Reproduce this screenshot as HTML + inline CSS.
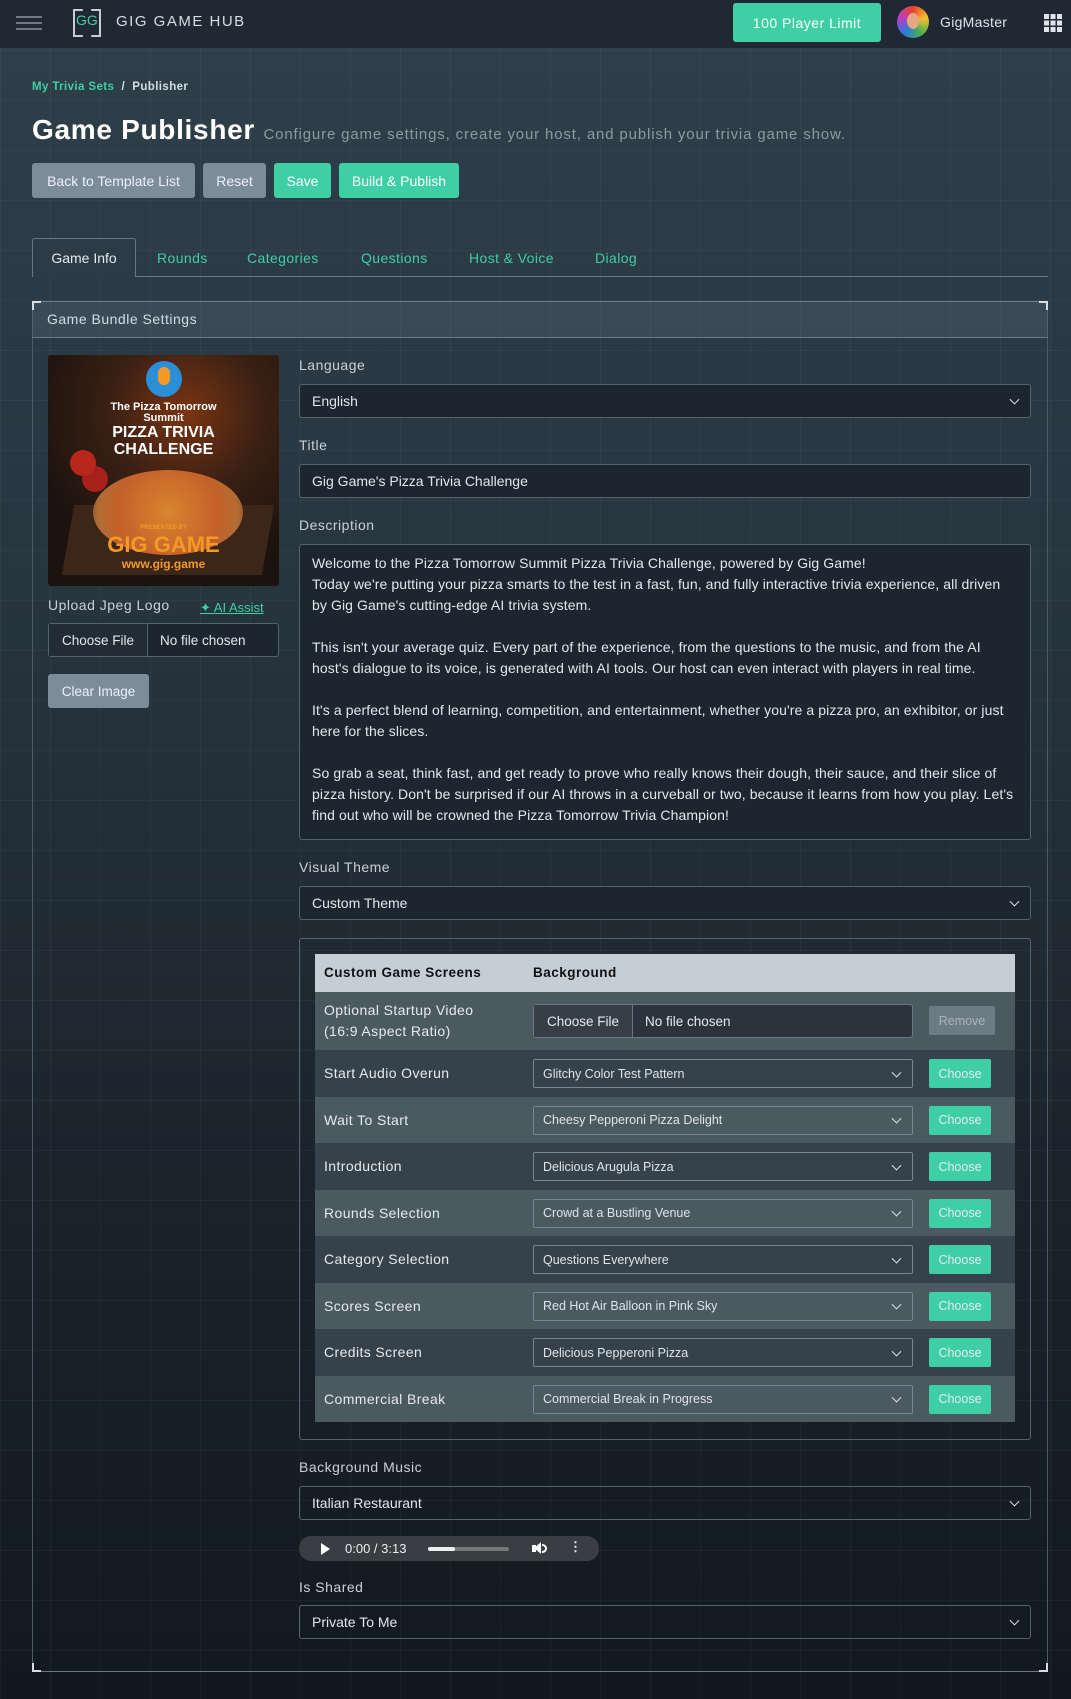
<!DOCTYPE html>
<html><head><meta charset="utf-8"><style>
*{box-sizing:border-box;margin:0;padding:0}
body{width:1071px;height:1699px;overflow:hidden;font-family:"Liberation Sans",sans-serif;color:#d6dde2;
background:linear-gradient(180deg,#2f404b 0%,#27353f 35%,#1a232c 70%,#121820 100%);position:relative}
.grid{position:absolute;inset:0;background-image:linear-gradient(rgba(255,255,255,.035) 1px,transparent 1px),linear-gradient(90deg,rgba(255,255,255,.035) 1px,transparent 1px);background-size:50px 50px;background-position:0 0}
.abs{position:absolute}
.nav{position:absolute;left:0;top:0;width:1071px;height:48px;background:#1f2833}
.btn{position:absolute;border-radius:3px;font-size:14px;display:flex;align-items:center;justify-content:center;color:#fff}
.g{background:#3ecfa4}.gr{background:#7c8d99;color:#eef}
.lbl{position:absolute;font-size:14px;color:#c9d1d6;letter-spacing:.5px}
.inp{position:absolute;left:299px;width:732px;border:1px solid #55636e;border-radius:3px;background:#1c2630;font-size:14px;color:#e2e7ea;padding-left:12px;display:flex;align-items:center}
.chev{position:absolute;right:12px;top:50%;width:7px;height:7px;border-right:1.5px solid #dfe4e8;border-bottom:1.5px solid #dfe4e8;transform:translateY(-70%) rotate(45deg)}
.row{position:absolute;left:315px;width:700px;height:46.5px;font-size:14px;color:#e6eaee;letter-spacing:.4px}
.row .t{position:absolute;left:9px;top:50%;transform:translateY(-50%)}
.row .s{position:absolute;left:218px;width:380px;height:29px;top:9px;border:1px solid #7a8690;border-radius:2px;font-size:12.5px;padding-left:9px;display:flex;align-items:center;letter-spacing:0;color:#dfe4e8}
.row .c{position:absolute;left:614px;width:62px;height:29px;top:9px;background:#3ecfa4;border-radius:2px;font-size:12.5px;display:flex;align-items:center;justify-content:center;letter-spacing:0}
.desc{font-size:14px;line-height:21px;white-space:nowrap;letter-spacing:.1px}
</style></head><body><div class="grid"></div>
<div class="nav">
 <div class="abs" style="left:16px;top:16px;width:26px;height:2px;background:#6d7a85;box-shadow:0 6px 0 #6d7a85,0 12px 0 #6d7a85"></div>
 <div class="abs" style="left:73px;top:9px;width:28px;height:28px;border:2px solid #c6ced4;clip-path:polygon(0 0,35% 0,35% 100%,0 100%,0 0,100% 0,100% 100%,65% 100%,65% 0)"></div>
 <div class="abs" style="left:76px;top:12px;font-size:14px;color:#3ecfa4">GG</div>
 <div class="abs" style="left:116px;top:13px;font-size:15px;letter-spacing:1.5px;color:#d6dde2">GIG GAME HUB</div>
 <div class="btn g" style="left:733px;top:3px;width:148px;height:39px;font-size:14px;letter-spacing:.5px">100 Player Limit</div>
 <div class="abs" style="left:897px;top:6px;width:32px;height:32px;border-radius:50%;background:conic-gradient(#e9432d,#f2c12e,#4cb050,#2a7bd6,#b43fc6,#e9432d)"><div style="position:absolute;left:10px;top:7px;width:12px;height:16px;border-radius:50%;background:#e2a884"></div></div>
 <div class="abs" style="left:940px;top:14px;font-size:14px;color:#dde3e7;letter-spacing:.3px">GigMaster</div>
 <div class="abs" style="left:1044px;top:14px;width:18px;height:18px;background:repeating-linear-gradient(90deg,#dfe4e8 0 5px,transparent 5px 6.5px);-webkit-mask:repeating-linear-gradient(180deg,#000 0 5px,transparent 5px 6.5px)"></div>
</div>
<div class="abs" style="left:32px;top:81px;font-size:11.5px;font-weight:bold;color:#3ecfa4;letter-spacing:.4px">My Trivia Sets <span style="color:#d6dde2">&nbsp;/&nbsp; Publisher</span></div>
<div class="abs" style="left:32px;top:114px;font-size:28px;font-weight:bold;color:#fff;letter-spacing:.7px">Game Publisher <span style="font-size:15px;font-weight:normal;color:#8d9aa3;letter-spacing:.85px">Configure game settings, create your host, and publish your trivia game show.</span></div>
<div class="btn gr" style="left:32px;top:163px;width:163px;height:35px">Back to Template List</div>
<div class="btn gr" style="left:203px;top:163px;width:63px;height:35px">Reset</div>
<div class="btn g" style="left:274px;top:163px;width:57px;height:35px">Save</div>
<div class="btn g" style="left:339px;top:163px;width:120px;height:35px">Build &amp; Publish</div>
<div class="abs" style="left:32px;top:276px;width:1016px;height:1px;background:#6b7882"></div>
<div class="abs" style="left:32px;top:238px;width:104px;height:39px;border:1px solid #6b7882;border-bottom:none;border-radius:3px 3px 0 0;background:#2c3b45;font-size:14px;color:#e6eaee;display:flex;align-items:center;justify-content:center">Game Info</div>
<div class="abs" style="top:250px;left:157px;font-size:14px;color:#3ecfa4;letter-spacing:.4px">Rounds</div>
<div class="abs" style="top:250px;left:247px;font-size:14px;color:#3ecfa4;letter-spacing:.4px">Categories</div>
<div class="abs" style="top:250px;left:361px;font-size:14px;color:#3ecfa4;letter-spacing:.4px">Questions</div>
<div class="abs" style="top:250px;left:469px;font-size:14px;color:#3ecfa4;letter-spacing:.4px">Host &amp; Voice</div>
<div class="abs" style="top:250px;left:595px;font-size:14px;color:#3ecfa4;letter-spacing:.4px">Dialog</div>
<!-- panel -->
<div class="abs" style="left:32px;top:301px;width:1016px;height:1371px;border:1px solid #4d5b66;border-top-color:#6b7882;border-bottom-color:#6b7882"></div>
<div class="abs" style="left:32px;top:301px;width:1016px;height:37px;background:rgba(120,140,155,.2);border-bottom:1px solid #6b7882;font-size:14px;color:#d6dde2;padding:10px 0 0 15px;letter-spacing:.5px">Game Bundle Settings</div>
<div class="abs" style="left:32px;top:301px;width:9px;height:9px;border-left:2px solid #d6dde2;border-top:2px solid #d6dde2"></div>
<div class="abs" style="left:1039px;top:301px;width:9px;height:9px;border-right:2px solid #d6dde2;border-top:2px solid #d6dde2"></div>
<div class="abs" style="left:32px;top:1663px;width:9px;height:9px;border-left:2px solid #d6dde2;border-bottom:2px solid #d6dde2"></div>
<div class="abs" style="left:1039px;top:1663px;width:9px;height:9px;border-right:2px solid #d6dde2;border-bottom:2px solid #d6dde2"></div>
<!-- image -->
<div class="abs" style="left:48px;top:355px;width:231px;height:231px;border-radius:3px;overflow:hidden;background:radial-gradient(circle at 60% 25%,#7a3412 0,#3a2014 35%,#1d130e 70%)">
 <div class="abs" style="left:20px;top:150px;width:200px;height:70px;background:#3b2619;transform:skewX(-10deg)"></div>
 <div class="abs" style="left:45px;top:115px;width:150px;height:85px;border-radius:50%;background:radial-gradient(circle,#d8842e 0,#c4602a 60%,#b36c34 80%,#7a4a25 100%)"></div>
 <div class="abs" style="left:22px;top:95px;width:26px;height:26px;border-radius:50%;background:#b8261c;box-shadow:12px 16px 0 #a8201a"></div>
 <div class="abs" style="left:98px;top:6px;width:36px;height:36px;border-radius:50%;background:#2a8fd6"><div style="position:absolute;left:12px;top:6px;width:12px;height:18px;border-radius:6px;background:#f39a26"></div></div>
 <div class="abs" style="left:0;top:47px;width:231px;text-align:center;font-weight:bold;color:#fff;font-size:11px;line-height:11px">The Pizza Tomorrow<br>Summit<br><span style="font-size:16px;line-height:17px">PIZZA TRIVIA<br>CHALLENGE</span></div>
 <div class="abs" style="left:0;top:170px;width:231px;text-align:center;font-weight:bold;color:#f39a26;font-size:6px">PRESENTED BY</div>
 <div class="abs" style="left:0;top:178px;width:231px;text-align:center;font-weight:bold;color:#f39a26;font-size:22px;line-height:24px">GIG GAME</div>
 <div class="abs" style="left:0;top:202px;width:231px;text-align:center;font-weight:bold;color:#f39a26;font-size:12px">www.gig.game</div>
</div>
<div class="lbl" style="left:48px;top:597px">Upload Jpeg Logo</div>
<div class="abs" style="left:200px;top:600px;font-size:13px;color:#3ecfa4;text-decoration:underline">✦ AI Assist</div>
<div class="abs" style="left:48px;top:623px;width:231px;height:34px;border:1px solid #55636e;border-radius:3px;background:#1c2630;font-size:13.5px;color:#e2e7ea;display:flex;align-items:center">
 <div style="width:99px;height:100%;border-right:1px solid #55636e;background:#222c36;display:flex;align-items:center;justify-content:center">Choose File</div><div style="padding-left:12px">No file chosen</div></div>
<div class="btn gr" style="left:48px;top:674px;width:101px;height:34px;font-size:13.5px">Clear Image</div>
<!-- right column -->
<div class="lbl" style="left:299px;top:357px">Language</div>
<div class="inp" style="top:384px;height:34px">English<span class="chev"></span></div>
<div class="lbl" style="left:299px;top:437px">Title</div>
<div class="inp" style="top:464px;height:34px">Gig Game's Pizza Trivia Challenge</div>
<div class="lbl" style="left:299px;top:517px">Description</div>
<div class="inp desc" style="top:544px;height:296px;padding-top:8px;display:block">Welcome to the Pizza Tomorrow Summit Pizza Trivia Challenge, powered by Gig Game!<br>Today we're putting your pizza smarts to the test in a fast, fun, and fully interactive trivia experience, all driven<br>by Gig Game's cutting-edge AI trivia system.<br><br>This isn't your average quiz. Every part of the experience, from the questions to the music, and from the AI<br>host's dialogue to its voice, is generated with AI tools. Our host can even interact with players in real time.<br><br>It's a perfect blend of learning, competition, and entertainment, whether you're a pizza pro, an exhibitor, or just<br>here for the slices.<br><br>So grab a seat, think fast, and get ready to prove who really knows their dough, their sauce, and their slice of<br>pizza history. Don't be surprised if our AI throws in a curveball or two, because it learns from how you play. Let's<br>find out who will be crowned the Pizza Tomorrow Trivia Champion!</div>
<div class="lbl" style="left:299px;top:859px">Visual Theme</div>
<div class="inp" style="top:886px;height:34px">Custom Theme<span class="chev"></span></div>
<div class="abs" style="left:299px;top:938px;width:732px;height:502px;border:1px solid #55636e;border-radius:3px"></div>
<div class="abs" style="left:315px;top:954px;width:700px;height:38px;background:#c5ced5;color:#111;font-weight:bold;font-size:13.5px;letter-spacing:.5px"><span class="abs" style="left:9px;top:11px">Custom Game Screens</span><span class="abs" style="left:218px;top:11px">Background</span></div>
<div class="row" style="top:992px;height:58px;background:#4b5961"><span class="t" style="line-height:21px">Optional Startup Video<br>(16:9 Aspect Ratio)</span>
 <div class="abs" style="left:218px;top:12px;width:380px;height:34px;border:1px solid #6b7882;border-radius:3px;background:#2b343c;display:flex;align-items:center;font-size:13.5px;letter-spacing:0"><div style="width:99px;height:100%;border-right:1px solid #6b7882;background:#363f47;display:flex;align-items:center;justify-content:center">Choose File</div><div style="padding-left:12px">No file chosen</div></div>
 <div class="abs" style="left:614px;top:14px;width:66px;height:29px;background:#6d7b85;color:#aab5bc;font-size:12.5px;display:flex;align-items:center;justify-content:center;border-radius:2px;letter-spacing:0">Remove</div></div>
<div class="row" style="top:1050px;background:#36424b"><span class="t">Start Audio Overun</span><div class="s">Glitchy Color Test Pattern<span class="chev"></span></div><div class="c">Choose</div></div>
<div class="row" style="top:1096.5px;background:#4b5961"><span class="t">Wait To Start</span><div class="s">Cheesy Pepperoni Pizza Delight<span class="chev"></span></div><div class="c">Choose</div></div>
<div class="row" style="top:1143px;background:#36424b"><span class="t">Introduction</span><div class="s">Delicious Arugula Pizza<span class="chev"></span></div><div class="c">Choose</div></div>
<div class="row" style="top:1189.5px;background:#4b5961"><span class="t">Rounds Selection</span><div class="s">Crowd at a Bustling Venue<span class="chev"></span></div><div class="c">Choose</div></div>
<div class="row" style="top:1236px;background:#36424b"><span class="t">Category Selection</span><div class="s">Questions Everywhere<span class="chev"></span></div><div class="c">Choose</div></div>
<div class="row" style="top:1282.5px;background:#4b5961"><span class="t">Scores Screen</span><div class="s">Red Hot Air Balloon in Pink Sky<span class="chev"></span></div><div class="c">Choose</div></div>
<div class="row" style="top:1329px;background:#36424b"><span class="t">Credits Screen</span><div class="s">Delicious Pepperoni Pizza<span class="chev"></span></div><div class="c">Choose</div></div>
<div class="row" style="top:1375.5px;background:#4b5961"><span class="t">Commercial Break</span><div class="s">Commercial Break in Progress<span class="chev"></span></div><div class="c">Choose</div></div>
<div class="lbl" style="left:299px;top:1459px">Background Music</div>
<div class="inp" style="top:1486px;height:34px;background:transparent">Italian Restaurant<span class="chev"></span></div>
<div class="abs" style="left:299px;top:1536px;width:300px;height:25px;border-radius:12px;background:#3a3d42;font-size:13px;color:#eee">
 <div class="abs" style="left:22px;top:7px;border-left:9px solid #fff;border-top:6px solid transparent;border-bottom:6px solid transparent"></div>
 <span class="abs" style="left:46px;top:5px">0:00 / 3:13</span>
 <div class="abs" style="left:129px;top:11px;width:81px;height:4px;background:#777;border-radius:2px"><div style="width:27px;height:4px;background:#eee;border-radius:2px"></div></div>
 <div class="abs" style="left:233px;top:9px;width:4px;height:7px;background:#fff"></div>
 <div class="abs" style="left:235px;top:6px;border-right:7px solid #fff;border-top:6px solid transparent;border-bottom:6px solid transparent"></div>
 <div class="abs" style="left:243px;top:8px;width:5px;height:9px;border:2px solid #fff;border-left:none;border-radius:0 6px 6px 0"></div>
 <span class="abs" style="left:270px;top:3px;font-weight:bold">⋮</span>
</div>
<div class="lbl" style="left:299px;top:1579px">Is Shared</div>
<div class="inp" style="top:1605px;height:34px;background:transparent">Private To Me<span class="chev"></span></div>
</body></html>
